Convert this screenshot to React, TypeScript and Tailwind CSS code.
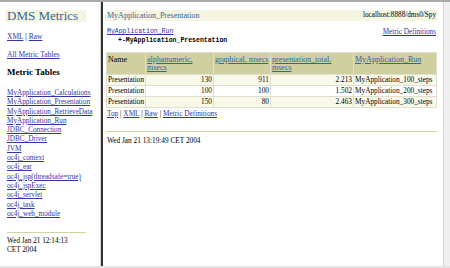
import React from "react";

const serif = { fontFamily: '"Liberation Serif", "Times New Roman", Times, serif' };
const mono = { fontFamily: '"Liberation Mono", "Courier New", monospace' };

const metricTables = [
  "MyApplication_Calculations",
  "MyApplication_Presentation",
  "MyApplication_RetrieveData",
  "MyApplication_Run",
  "JDBC_Connection",
  "JDBC_Driver",
  "JVM",
  "oc4j_context",
  "oc4j_ear",
  "oc4j_jsp(threadsafe=true)",
  "oc4j_jspExec",
  "oc4j_servlet",
  "oc4j_task",
  "oc4j_web_module",
];

const rows = [
  { a: "130", g: "911", p: "2.213", r: "MyApplication_100_steps" },
  { a: "100", g: "100", p: "1.502", r: "MyApplication_200_steps" },
  { a: "150", g: "80", p: "2.463", r: "MyApplication_300_steps" },
];

const headers: { label: React.ReactNode; link: boolean }[] = [
  { label: "Name", link: false },
  { label: (<>alphanumeric,<br />msecs</>), link: true },
  { label: "graphical, msecs", link: true },
  { label: (<>presentation_total,<br />msecs</>), link: true },
  { label: "MyApplication_Run", link: true },
];

function L({ children }: { children: React.ReactNode }) {
  return <a className="text-[#3333aa] underline">{children}</a>;
}

export default function App() {
  return (
    <div
      className="w-[450px] h-[268px] bg-white flex overflow-hidden border-t-2 border-t-[#a8a8a8] border-b-2 border-b-[#e4e4e4] text-black"
      style={serif}
    >
      {/* left frame */}
      <div className="w-[101px] shrink-0 border-r border-r-[#d8d8d8] pl-[5px] pt-[8px] flex flex-col" style={serif}>
        <div className="w-[81px] h-[12px] bg-[#f5f5e2] pl-[2px] text-[13px] leading-[12px] text-[#336699]" style={serif}>
          DMS Metrics
        </div>
        <div className="mt-[10px] pl-[2px] text-[7.5px] leading-[9px]">
          <L>XML</L> | <L>Raw</L>
        </div>
        <div className="mt-[9px] pl-[2px] text-[7.5px] leading-[9px]">
          <L>All Metric Tables</L>
        </div>
        <div className="mt-[8px] pl-[2px] text-[9px] leading-[10px] font-bold" style={serif}>
          Metric Tables
        </div>
        <div className="mt-[12px] pl-[2px] flex flex-col text-[7.2px] leading-[9.3px]">
          {metricTables.map((m) => (
            <div key={m} className="whitespace-nowrap h-[9.3px]">
              <L>{m}</L>
            </div>
          ))}
        </div>
        <div className="mt-[13px] ml-[2px] w-[79px] h-px bg-[#cdd5a3]" />
        <div className="mt-[4px] pl-[2px] text-[7.2px] leading-[9px]">
          Wed Jan 21 12:14:13
          <br />
          CET 2004
        </div>
      </div>
      <div className="w-[2px] shrink-0 bg-[#333333]" />
      {/* right frame */}
      <div className="flex-1 pl-[2px] pr-[6px] pt-[8px] flex flex-col" style={serif}>
        <div className="h-[11px] bg-[#f5f5e2] flex items-center justify-between pl-[2px] pr-[1px]">
          <span className="text-[8px] leading-[11px] text-[#336699]">MyApplication_Presentation</span>
          <span className="text-[7.2px] leading-[11px]">localhost:8888/dms0/Spy</span>
        </div>
        <div className="mt-[6px] flex justify-between pl-[2px]">
          <div className="text-[6.5px] leading-[9px]" style={mono}>
            <div>
              <L>MyApplication_Run</L>
            </div>
            <div className="font-bold pl-[11px]">+-MyApplication_Presentation</div>
          </div>
          <div className="text-[7.2px] leading-[9px] pt-[1px] pr-[1px]">
            <L>Metric Definitions</L>
          </div>
        </div>
        <table className="mt-[7px] ml-[1px] w-[330px] table-fixed border-collapse border border-[#c8c8b8] text-[7.3px]" style={serif}>
          <colgroup>
            <col className="w-[39px]" />
            <col className="w-[68px]" />
            <col className="w-[57px]" />
            <col className="w-[83px]" />
            <col className="w-[83px]" />
          </colgroup>
          <thead>
            <tr className="bg-[#cfcf9f] h-[22px]">
              {headers.map((h, i) => (
                <th
                  key={i}
                  className="border border-[#e0e0d0] align-top text-left font-normal pt-[3px] pb-[2px] px-[1px] text-[8px] leading-[8px] whitespace-nowrap"
                >
                  {h.link ? <a className="text-[#336699] underline">{h.label}</a> : <span>{h.label}</span>}
                </th>
              ))}
            </tr>
          </thead>
          <tbody>
            {rows.map((r, i) => (
              <tr key={r.r} className={i % 2 === 1 ? "bg-white h-[11px]" : "bg-[#f9f9ea] h-[11px]"}>
                <td className="border border-[#e0e0d0] px-[1px] leading-[10px]">Presentation</td>
                <td className="border border-[#e0e0d0] px-[1px] leading-[10px] text-right">{r.a}</td>
                <td className="border border-[#e0e0d0] px-[1px] leading-[10px] text-right">{r.g}</td>
                <td className="border border-[#e0e0d0] px-[1px] leading-[10px] text-right">{r.p}</td>
                <td className="border border-[#e0e0d0] px-[1px] leading-[10px] whitespace-nowrap">{r.r}</td>
              </tr>
            ))}
          </tbody>
        </table>
        <div className="mt-[1px] pl-[2px] text-[7.3px] leading-[9px]">
          <L>Top</L> | <L>XML</L> | <L>Raw</L> | <L>Metric Definitions</L>
        </div>
        <div className="mt-[13px] ml-[1px] w-[331px] h-px bg-[#cdd5a3]" />
        <div className="mt-[4px] pl-[2px] text-[7.3px] leading-[9px]">Wed Jan 21 13:19:49 CET 2004</div>
      </div>
      {/* scrollbar strip */}
      <div className="w-[7px] shrink-0 bg-[#efefef] border-l border-l-[#d4d4d4]" />
    </div>
  );
}
